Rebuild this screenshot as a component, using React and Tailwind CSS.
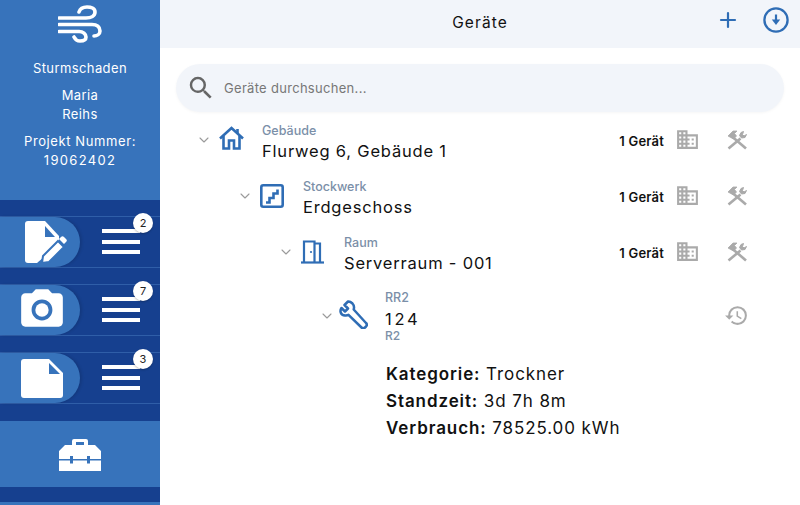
import { ChevronDown, Plus } from "lucide-react";
import { MdDomain, MdHistory, MdSearch, MdPhotoCamera } from "react-icons/md";

const BLUE = "#2f6db5";

function WindIcon() {
  return (
    <svg width="44" height="38" viewBox="0 0 44 38" fill="none" stroke="white" strokeWidth="3.600" strokeLinecap="round">
      <path d="M1 13H28C33 13 37 11 37 7C37 3 33 2 29 2C25 2 22 4 21 7" />
      <path d="M1 19.500H34C39 19.500 42 22 42 26C42 29 39 31 36 31" />
      <path d="M1 26.500H21C25 26.500 28 29 28 32C28 35 25 36 22 36C19 36 17 34 16 32" />
    </svg>
  );
}

function EditDocIcon() {
  return (
    <svg width="42" height="42" viewBox="0 0 42 42">
      <path d="M3 0h17l14 15v8L12 42H3a3 3 0 0 1-3-3V3a3 3 0 0 1 3-3z" fill="white" />
      <path d="M20 5l10 11H20z" fill="#3773bb" />
      <path d="M17 42l1-7 15-15 6 6-15 15z" fill="white" stroke="#3773bb" strokeWidth="2" />
      <path d="M34 18l2-2a2 2 0 0 1 3 0l2 2a2 2 0 0 1 0 3l-2 2z" fill="white" />
    </svg>
  );
}

function NoteIcon() {
  return (
    <svg width="42" height="39" viewBox="0 0 42 39">
      <path d="M3 0h25l14 14v22a3 3 0 0 1-3 3H3a3 3 0 0 1-3-3V3a3 3 0 0 1 3-3z" fill="white" />
      <path d="M28 4l11 11H28z" fill="#3773bb" />
    </svg>
  );
}

function ToolboxIcon() {
  return (
    <svg width="42" height="33" viewBox="0 0 42 33">
      <path d="M13 7V3a2 2 0 0 1 2-2h12a2 2 0 0 1 2 2v4h7l6 6v8H31v-3h-3v3H14v-3h-3v3H0v-8l6-6zM17 7h8V4h-8z" fill="white" fillRule="evenodd" />
      <path d="M0 22.500h11v3h3v-3h14v3h3v-3h11V33H0z" fill="white" />
    </svg>
  );
}

function HomeIcon() {
  return (
    <svg width="25" height="24" viewBox="0 0 25 24" fill="none" stroke={BLUE} strokeWidth="2.600">
      <path d="M1 12.500L12.500 2 24 12.500" />
      <path d="M18.500 3v5" />
      <path d="M4.500 10v12.500h5.500v-8h5v8h5.500V10" />
    </svg>
  );
}

function StairsIcon() {
  return (
    <svg width="24" height="24" viewBox="0 0 24 24" fill="none" stroke={BLUE} strokeWidth="2.600">
      <rect x="1.300" y="1.300" width="21.400" height="21.400" rx="2" />
      <path d="M6 18.500h3.500v-4.500h4V9.500h4V5.500" />
    </svg>
  );
}

function DoorIcon() {
  return (
    <svg width="24" height="24" viewBox="0 0 24 24" fill="none" stroke={BLUE} strokeWidth="2.200">
      <path d="M0 22.500h23" />
      <path d="M3 22.500V1.500h10.500v21" />
      <path d="M13.500 3.500h5.500v19" />
      <circle cx="10" cy="12" r="1.100" fill={BLUE} stroke="none" />
    </svg>
  );
}

function WrenchIcon() {
  return (
    <svg width="29" height="29" viewBox="0 0 29 29" fill="none" stroke={BLUE} strokeWidth="2.500" strokeLinejoin="round">
      <path d="M9 1.500L5.500 5l3.500 3.500L6 11.500 2.500 8C0.500 11 1.500 15 6 15.500c1.500.2 2.800-.2 3.500-.6L22.500 27.500c1 1 2.500 1 3.500 0l1-1c1-1 1-2.500 0-3.500L14.700 9.500c.6-2 .2-4.500-1.200-6C12 2 10.500 1.300 9 1.500z" />
    </svg>
  );
}

function ToolsIcon() {
  return (
    <svg width="22" height="20" viewBox="0 0 22 20" fill="none" stroke="#aaa">
      <path d="M6 6.500L20 18.500" strokeWidth="2.600" />
      <path d="M2 6l5-5h4L8.500 3.500l2 2.500-3 3z" fill="#aaa" strokeWidth="0.800" strokeLinejoin="round" />
      <path d="M14.500 8.500L2.500 18.500" strokeWidth="2.600" />
      <path d="M15 2.500l-1.500 3 2 2.500 3.500-.5 1.500-3-2.500 1.500-1.500-1.500 1-3z" fill="#aaa" strokeWidth="1" strokeLinejoin="round" />
    </svg>
  );
}

function DownloadCircle() {
  return (
    <svg width="26" height="26" viewBox="0 0 26 26" fill="none">
      <circle cx="13" cy="13" r="11.600" stroke={BLUE} strokeWidth="2.300" />
      <path d="M13 7.500v6" stroke={BLUE} strokeWidth="2.200" />
      <path d="M8.800 12.500h8.400L13 18z" fill={BLUE} />
    </svg>
  );
}

const menu = [
  { icon: <EditDocIcon />, count: 2, shift: "pl-[25px]" },
  { icon: <MdPhotoCamera size={50} color="white" />, count: 7, shift: "pl-[17px]" },
  { icon: <NoteIcon />, count: 3, shift: "pl-[21px]" },
];

function MenuRow({ icon, count, shift }) {
  return (
    <div className="flex h-[52px] border-y border-[#2f5ea8] bg-[#16408f]">
      <div className={`flex w-20 items-center rounded-r-[26px] bg-[#3773bb] shadow-[2px_0_3px_rgba(0,0,0,0.12)] ${shift}`}>{icon}</div>
      <div className="relative ml-[22px] mt-[12px] flex h-[25px] w-[38px] flex-col justify-between">
        <span className="h-1 bg-white" />
        <span className="h-1 bg-white" />
        <span className="h-1 bg-white" />
        <span className="absolute -right-[13px] -top-[16px] flex h-5 w-5 items-center justify-center rounded-full bg-white text-[11px] text-[#222] shadow-[0_1px_2px_rgba(0,0,0,0.25)]">{count}</span>
      </div>
    </div>
  );
}

function Sidebar() {
  return (
    <aside className="flex w-40 shrink-0 flex-col bg-[#16408f] text-center text-[13px] text-white">
      <div className="h-[201px] bg-[#3773bb] pt-[5px]">
        <div className="flex justify-center"><WindIcon /></div>
        <p className="mt-[16px] leading-[19px] tracking-[0.4px]">Sturmschaden</p>
        <p className="mt-[8px] leading-[19px] tracking-[0.4px]">Maria</p>
        <p className="leading-[19px] tracking-[0.4px]">Reihs</p>
        <p className="mt-[8px] leading-[19px] tracking-[0.6px]">Projekt Nummer:</p>
        <p className="leading-[19px] tracking-[1.300px]">19062402</p>
      </div>
      <div className="mt-4 flex flex-col gap-4">
        {menu.map((m) => <MenuRow key={m.count} {...m} />)}
      </div>
      <div className="mt-[17px] flex h-[66px] items-center justify-center bg-[#3773bb]"><ToolboxIcon /></div>
      <div className="mt-[15px] h-[3px] bg-[#3773bb]" />
    </aside>
  );
}

const rows = [
  { indent: "pl-[36px]", icon: <HomeIcon />, iconTop: "mt-[13px]", label: "Gebäude", title: "Flurweg 6, Gebäude 1" },
  { indent: "pl-[77px]", icon: <StairsIcon />, iconTop: "mt-[15px]", label: "Stockwerk", title: "Erdgeschoss" },
  { indent: "pl-[118px]", icon: <DoorIcon />, iconTop: "mt-[15px]", label: "Raum", title: "Serverraum - 001" },
];

function TreeRow({ indent, icon, iconTop, label, title }) {
  return (
    <div className={`flex h-14 ${indent}`}>
      <ChevronDown size={16} strokeWidth={1.6} className="mt-[19px] text-[#9a9a9a]" />
      <div className={`ml-[7px] w-[25px] ${iconTop}`}>{icon}</div>
      <div className="ml-[18px] pt-[10px]">
        <p className="text-[12.500px] font-medium leading-4 text-[#7b8fa8]">{label}</p>
        <p className="mt-[1px] text-[16.500px] leading-[22px] tracking-[0.8px] text-[#111]">{title}</p>
      </div>
      <p className="ml-auto mt-[20px] text-[13px] font-semibold leading-4 tracking-[0.2px] text-[#111]">1 Gerät</p>
      <MdDomain size={25} className="ml-[11px] mt-[14px] text-[#aaa]" />
      <div className="ml-[26px] mr-[52px] mt-[17px]"><ToolsIcon /></div>
    </div>
  );
}

function Main() {
  return (
    <main className="flex-1 bg-white">
      <header className="relative flex h-12 items-center justify-center bg-[#f2f5fa] pb-[2px] text-[15.500px] tracking-[1.100px] text-[#111]">
        Geräte
        <Plus size={24} strokeWidth={2.200} color={BLUE} className="absolute right-[60px] top-[8px]" />
        <span className="absolute right-[11px] top-[7px]"><DownloadCircle /></span>
      </header>
      <div className="mx-4 mt-4 flex h-12 items-center rounded-3xl bg-[#f2f5fa] pl-[10px] shadow-[0_1px_3px_rgba(0,0,0,0.04)]">
        <MdSearch size={30} className="text-[#666]" />
        <span className="ml-[8px] mt-[2px] text-[13px] tracking-[0.3px] text-[#777]">Geräte durchsuchen...</span>
      </div>
      <div className="mt-[1px]">
        {rows.map((r) => <TreeRow key={r.label} {...r} />)}
        <div className="flex pl-[159px]">
          <ChevronDown size={16} strokeWidth={1.6} className="mt-[27px] text-[#9a9a9a]" />
          <div className="ml-[4px] mt-[19px] w-[29px]"><WrenchIcon /></div>
          <div className="ml-[17px] pt-[9px]">
            <p className="text-[12.500px] font-medium leading-4 text-[#7b8fa8]">RR2</p>
            <p className="mt-[2px] text-[16.500px] leading-[22px] tracking-[2.800px] text-[#111]">124</p>
            <p className="text-[12px] font-medium leading-[12px] text-[#7b8fa8]">R2</p>
            <div className="ml-[1px] mt-[19px] text-[17px] leading-[27px] tracking-[0.900px] text-[#111]">
              <p><b className="font-semibold">Kategorie:</b> Trockner</p>
              <p><b className="font-semibold">Standzeit:</b> 3d 7h 8m</p>
              <p><b className="font-semibold">Verbrauch:</b> 78525.00 kWh</p>
            </div>
          </div>
          <MdHistory size={25} className="ml-auto mr-[51px] mt-[22px] text-[#aaa]" />
        </div>
      </div>
    </main>
  );
}

export default function App() {
  return (
    <div className="flex h-[505px] w-[800px] overflow-hidden font-['Inter',sans-serif]">
      <Sidebar />
      <Main />
    </div>
  );
}
